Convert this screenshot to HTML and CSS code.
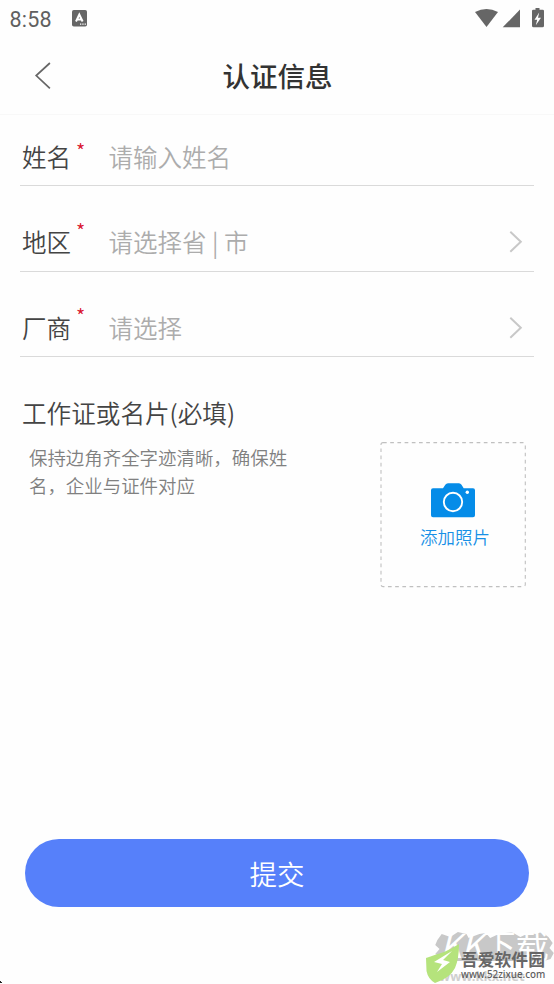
FILE: index.html
```html
<!DOCTYPE html>
<html lang="zh-CN">
<head>
<meta charset="utf-8">
<title>认证信息</title>
<link rel="stylesheet" href="styles.css">
</head>
<body>
<div class="screen">
  <div class="status">
    <span class="time">8:58</span>
    <svg class="lang" width="15" height="17" viewBox="0 0 15 17"><rect width="15" height="16.5" rx="1.8" fill="#666"/><path d="M4 11.5 7.3 4.5 10.6 11.5M5.2 9.5h4" fill="none" stroke="#fff" stroke-width="2"/><path d="M8 14.2h1.3M10.3 14.2h1.3M12.6 14.2h1.3" stroke="#fff" stroke-width="1.2"/></svg>
    <svg class="signals" width="70" height="20" viewBox="0 0 70 20"><g fill="#666"><path d="M0 4.1Q11.5-2.3 23 4.1L11.5 19Z"/><path d="M45 1.6V19.3H27.7Z"/><path d="M60.5 0h4v1.7h3.2q1.3 0 1.3 1.3v14.8q0 1.5-1.5 1.5h-9q-1.5 0-1.5-1.5V3q0-1.3 1.3-1.3h2.2z"/></g><path d="M64.2 4.5 59.5 11.8h2.7L60.8 17.2 66 9.8h-3z" fill="#fff"/></svg>
  </div>
  <header class="header">
    <svg class="back" width="18" height="28" viewBox="0 0 18 28"><path d="M15.9 1 2.2 13.6 15.9 26.4" fill="none" stroke="#666" stroke-width="1.7"/></svg>
    <h1>认证信息</h1>
  </header>
  <main class="form">
    <div class="row first"><span class="label">姓名</span><span class="star">*</span><span class="hint">请输入姓名</span></div>
    <div class="row"><span class="label">地区</span><span class="star">*</span><span class="hint">请选择省 | 市</span><svg class="chevron" width="14" height="24" viewBox="0 0 14 24"><path d="M1.3 1.8 11.8 11.8 1.3 21.8" fill="none" stroke="#c8c8c8" stroke-width="2"/></svg></div>
    <div class="row"><span class="label">厂商</span><span class="star">*</span><span class="hint">请选择</span><svg class="chevron" width="14" height="24" viewBox="0 0 14 24"><path d="M1.3 1.8 11.8 11.8 1.3 21.8" fill="none" stroke="#c8c8c8" stroke-width="2"/></svg></div>
    <h2>工作证或名片(必填)</h2>
    <div class="upload">
      <p class="note">保持边角齐全字迹清晰，确保姓名，企业与证件对应</p>
      <div class="photo">
        <svg class="frame" width="146" height="146" viewBox="0 0 146 146"><rect x="1" y=".6" width="144.3" height="144" rx="2" fill="none" stroke="#c0c0c0" stroke-width="1.1" stroke-dasharray="3.7 3.5"/></svg>
        <svg class="camera" width="44" height="35" viewBox="0 0 44 35"><path d="M2 5.2H12L14.3 1.8Q15.3.3 17 .3H28Q29.5.3 30.5 1.8L32.7 5.2H42Q44 5.2 44 7.2V32.3Q44 34.3 42 34.3H2Q0 34.3 0 32.3V7.2Q0 5.2 2 5.2Z" fill="#058ce8"/><circle cx="22" cy="19" r="9.2" fill="none" stroke="#fff" stroke-width="1.9"/><circle cx="36.3" cy="9.3" r="1.7" fill="#fff"/></svg>
        <span>添加照片</span>
      </div>
    </div>
  </main>
  <button class="submit">提交</button>
  <div class="watermark">
    <svg class="splash" width="125" height="34" viewBox="0 0 116 34" preserveAspectRatio="none"><path d="M5 10 9 4 17 7 24 2 32 4 34 8 44 4 50 3 54 8 62 4 74 2 82 7 90 3 96 4 102 2 108 7 112 13 109 18 113 23 110 29 104 31H14L9 27 3 24 7 19 3 15Z" fill="#c8c8c8"/></svg>
    <span class="ghost-title"><i>KK</i>下载</span>
    <span class="ghost-url">www.kkx.net</span>
    <svg class="leaf" width="36" height="42" viewBox="0 0 36 42"><path d="M1 14Q12 10 19 8Q26 5 34 0Q34 15 30 24Q25 34 10 39Q3 35 1.5 27Z" fill="#b5e37c"/><path d="M27 7 9 18 17 20 12 28 25 18 18 16Z" fill="#fff"/></svg>
    <span class="brand">吾爱软件园</span>
    <span class="url">www.52zixue.com</span>
  </div>
  <svg class="corner" width="3" height="4" viewBox="0 0 3 4"><path d="M0 1h1v1h1v1H0z" fill="#222"/></svg>
</div>
</body>
</html>
```
FILE: styles.css
```css
* { box-sizing: border-box; }
body { margin: 0; background: #fefefe; font-family: "Noto Sans CJK SC", sans-serif; font-weight: 350; color: #444; }
.screen { position: relative; width: 554px; height: 984px; overflow: hidden; display: flex; flex-direction: column; }
.status { height: 38px; flex: none; display: flex; align-items: flex-start; padding: 9px 9px 0 9.5px; color: #606060; }
.time { width: 62.5px; font: 400 21.5px/22px Roboto, sans-serif; letter-spacing: .2px; }
.lang { margin-top: 1px; }
.signals { margin: -1px 0 0 auto; }
.header { position: relative; height: 77px; flex: none; display: flex; align-items: center; justify-content: center; border-bottom: 1px solid #f8f8f8; }
.back { position: absolute; left: 34px; top: 24px; }
h1 { margin: 0 0 2px 1px; font-size: 27.5px; line-height: 40px; font-weight: 500; color: #333; }
.form { padding: 0 20px; }
.row { height: 85.6px; border-bottom: 1px solid #dadada; display: flex; align-items: center; padding: 28px 11.5px 0 2px; font-size: 24.5px; line-height: 34px; }
.row.first { height: 71px; padding-top: 13px; }
.label { width: 54px; }
.star { width: 32.5px; color: #d9162f; font-size: 20px; line-height: 20px; margin-top: -23px; }
.row.first .star { margin-top: -11px; }
.hint { color: #acacac; }
.chevron { margin-left: auto; }
h2 { margin: 36px 0 0 2px; font-size: 24.6px; line-height: 38px; font-weight: 350; }
.upload { display: flex; justify-content: space-between; padding: 11px 8px 0 9px; }
.note { margin: 1px 0 0; width: 262px; font-size: 18.45px; line-height: 28px; color: #808080; }
.photo { position: relative; width: 146px; height: 146px; display: flex; flex-direction: column; align-items: center; padding: 41px 0 0 0; color: #1890e6; font-size: 17.5px; line-height: 26px; }
.photo span { margin: 6px 0 0 4px; }
.frame { position: absolute; left: 0; top: 0; }
.submit { margin: auto 25px 77px; height: 68px; flex: none; border: 0; border-radius: 34px; background: #5680fa; color: #fff; font: 350 27.5px/40px "Noto Sans CJK SC", sans-serif; padding: 0 0 1px; }
.watermark { position: absolute; left: 425px; top: 930px; width: 129px; height: 54px; white-space: nowrap; }
.watermark > * { position: absolute; }
.splash { left: 7px; top: 0; }
.ghost-title { left: 15px; top: -2px; color: #fff; font-size: 33px; line-height: 32px; font-weight: 400; }
.ghost-url { left: 14px; top: 40px; color: #cfcfcf; font: 700 13px/13px "Noto Sans", sans-serif; }
.leaf { left: 0; top: 14px; }
.brand { left: 36px; top: 19px; color: #666; font-size: 16.8px; line-height: 21px; font-weight: 700; }
.url { left: 36px; top: 38px; color: #5e5e5e; font: 500 9.8px/13px "Noto Sans", sans-serif; }
.corner { position: absolute; left: 0; bottom: 0; }
```
